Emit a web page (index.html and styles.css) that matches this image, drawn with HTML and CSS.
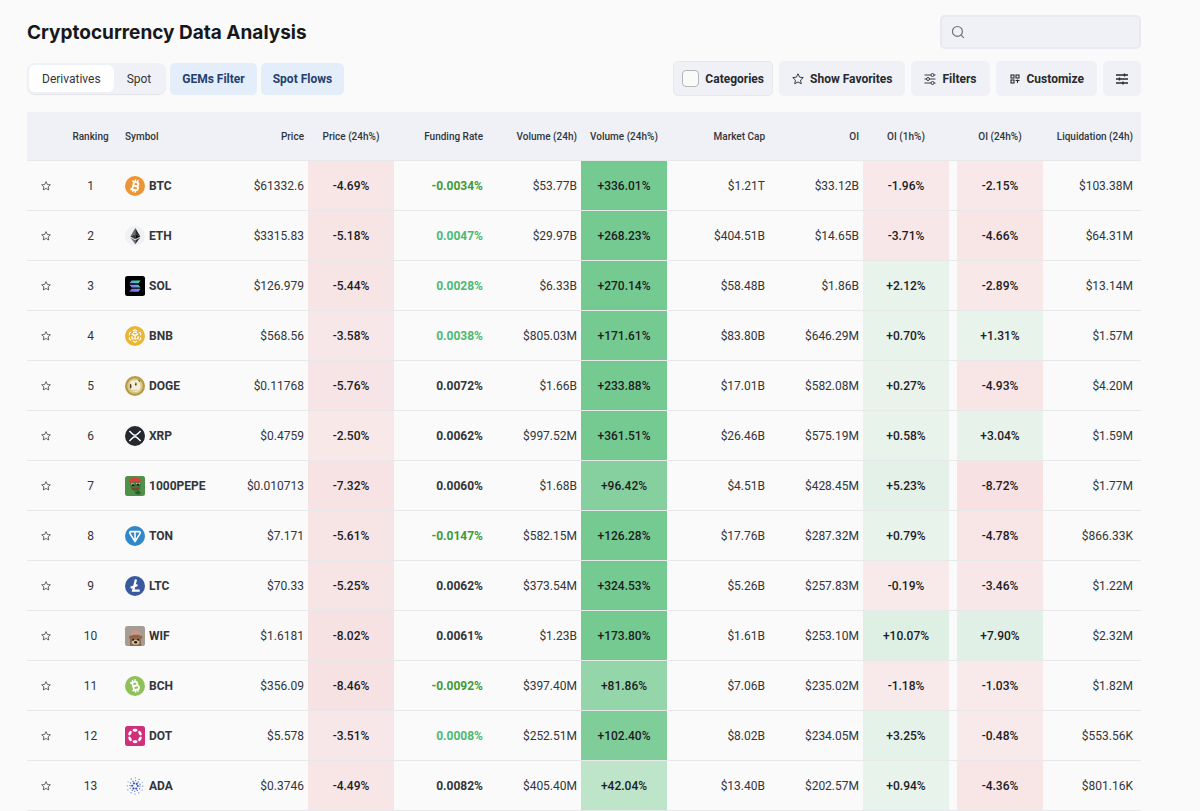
FILE: index.html
```
<!DOCTYPE html>
<html lang="en">
<head>
  <meta charset="UTF-8">
  <meta name="viewport" content="width=device-width, initial-scale=1.0">
  <title>Cryptocurrency Data Analysis</title>
  <link rel="stylesheet" href="styles.css">
</head>
<body>

  <!-- shared icons -->
  <svg class="sprite" aria-hidden="true">
    <symbol id="i-star" viewBox="0 0 24 24">
      <path d="M12 1.5l3.2 6.8 7.3.9-5.4 5 1.4 7.3-6.5-3.6-6.500 3.600 1.400-7.300-5.400-5 7.300-.9z" fill="none" stroke="currentColor" stroke-width="1.8" stroke-linejoin="round"/>
    </symbol>
    <symbol id="c-btc" viewBox="0 0 32 32">
      <circle cx="16" cy="16" r="16" fill="#ee9434"/>
      <g transform="rotate(14 16 16)" fill="none" stroke="#fff" stroke-width="3">
        <path d="M10 9.600h7.500a3.100 3.100 0 0 1 0 6.200H13M13 15.800h5.300a3.300 3.300 0 0 1 0 6.600H10M13 9.600v12.800"/>
        <path d="M14.500 5.500v4M18.500 5.500v4M14.500 22.500v4M18.500 22.500v4" stroke-width="2.200"/>
      </g>
    </symbol>
    <symbol id="c-eth" viewBox="0 0 32 32">
      <circle cx="16" cy="16" r="16" fill="#f0f1f4"/>
      <path d="M16.500 3v9.900l-8 3.700z" fill="#6b6b6b"/>
      <path d="M16.500 3v9.900l8 3.700z" fill="#2b2b2b"/>
      <path d="M16.500 12.900v8.400l-8-4.700z" fill="#3a3a3a"/>
      <path d="M16.500 12.900v8.400l8-4.700z" fill="#111"/>
      <path d="M8.500 18.200l8 4.700V29z" fill="#777"/>
      <path d="M24.500 18.200l-8 4.700V29z" fill="#333"/>
    </symbol>
    <linearGradient id="sol-fill" x1="8" y1="25" x2="24" y2="7" gradientUnits="userSpaceOnUse">
      <stop offset="0" stop-color="#a04bfa"/>
      <stop offset=".5" stop-color="#6a97dc"/>
      <stop offset="1" stop-color="#35eba6"/>
    </linearGradient>
    <symbol id="c-sol" viewBox="0 0 32 32">
      <rect width="32" height="32" rx="4" fill="#000"/>
      <path d="M10.500 7H25l-3.500 4.500H7zM7 13.800h14.500l3.500 4.500H10.500zM10.500 20.500H25L21.500 25H7z" fill="url(#sol-fill)"/>
    </symbol>
    <symbol id="c-bnb" viewBox="0 0 32 32">
      <circle cx="16" cy="16" r="16" fill="#e8b534"/>
      <g fill="none" stroke="#fff" stroke-width="1.8">
        <path d="M12.500 8L16 6l3.500 2M22 9.600l3 1.800v3.400M25 18v3l-3 1.800M19.500 24L16 26l-3.500-2M10 22.800L7 21v-3M7 14.800v-3.400l3-1.800"/>
        <path d="M11 12.500l5 3 5-3M16 15.500v6.500M11 16.500v3l2.500 1.500M21 16.500v3L18.500 21M13 11l3-1.500 3 1.500" stroke-width="2.200"/>
      </g>
    </symbol>
    <symbol id="c-doge" viewBox="0 0 32 32">
      <circle cx="16" cy="16" r="16" fill="#b59a43"/>
      <circle cx="16" cy="16" r="12.500" fill="#d9c788"/>
      <path d="M8 13c0-5 4-7 8-6l6-1 2 6c2 6 0 12-5 13-6 1-11-2-11-7z" fill="#f5eed6"/>
      <path d="M8 13c2-1 3 2 2 6l-2 1z" fill="#4a4022"/>
      <path d="M16 10c3-1 4 2 3 5l-3 1z" fill="#b9a15a"/>
      <circle cx="17" cy="13" r="1.200" fill="#333"/>
      <path d="M20 5l4 2-1 3z" fill="#6a5728"/>
      <path d="M10 22c3 2 7 2 10 0" stroke="#c8b06a" fill="none"/>
    </symbol>
    <symbol id="c-xrp" viewBox="0 0 32 32">
      <circle cx="16" cy="16" r="16" fill="#23292f"/>
      <path d="M7 8l5 4.900c2.300 2.200 5.700 2.200 8 0L25 8M7 24l5-4.900c2.300-2.200 5.700-2.200 8 0l5 4.900" fill="none" stroke="#fff" stroke-width="2.400"/>
    </symbol>
    <symbol id="c-pepe" viewBox="0 0 32 32">
      <rect width="32" height="32" rx="4" fill="#4f9148"/>
      <path d="M8 9c1 5 0 9 4 13l3 3h7c4-4 3-11 2-16z" fill="#3c7a3b"/>
      <path d="M6 8c1-6 16-8 18-2l2 2-3 3c-4-2-10-2-14 1z" fill="#d8403a"/>
      <path d="M10 12h5v2h-5zM18 11h6v2h-6z" fill="#e9f0e6"/>
      <path d="M11 13h4v3h-4zM19 12h4v3h-4z" fill="#161b17"/>
      <path d="M9 18c4 2 9 2 14 0l-1 3c-3 2-8 2-11 0z" fill="#8e3b2d"/>
      <path d="M15 27l6-4 5 4-5 3z" fill="#2c5b2f"/>
    </symbol>
    <symbol id="c-ton" viewBox="0 0 32 32">
      <circle cx="16" cy="16" r="16" fill="#3088cb"/>
      <path d="M9.500 9h13c1.600 0 2.500 1.400 1.700 2.700L16 25 7.800 11.700C7 10.400 7.900 9 9.500 9zM16 9v15" fill="none" stroke="#fff" stroke-width="2.500" stroke-linejoin="round"/>
    </symbol>
    <symbol id="c-ltc" viewBox="0 0 32 32">
      <circle cx="16" cy="16" r="16" fill="#3a5a9d"/>
      <path d="M17.500 5.500L13 23.500h10.500M9 18.800l11-4.300" fill="none" stroke="#fff" stroke-width="3.600"/>
    </symbol>
    <symbol id="c-wif" viewBox="0 0 32 32">
      <rect width="32" height="32" rx="4" fill="#a59c92"/>
      <path d="M8 20c0-4 16-4 17 0l1 12H8z" fill="#8c6a49"/>
      <path d="M8 17c0-13 16-14 18 0-6-3-12-3-18 0z" fill="#c9998a"/>
      <path d="M6 17c6-4 16-4 22 0l-2 4c-6-3-12-3-18 0z" fill="#96604f"/>
      <ellipse cx="17" cy="26" rx="6" ry="4" fill="#d8c2a0"/>
      <circle cx="13" cy="22" r="1.500" fill="#1d1713"/>
      <circle cx="21" cy="22" r="1.500" fill="#1d1713"/>
      <ellipse cx="17" cy="26" rx="2.500" ry="2" fill="#1d1713"/>
    </symbol>
    <symbol id="c-bch" viewBox="0 0 32 32">
      <circle cx="16" cy="16" r="16" fill="#8fc159"/>
      <g transform="rotate(-16 16 16)" fill="none" stroke="#fff" stroke-width="3">
        <path d="M10 9.600h7.500a3.100 3.100 0 0 1 0 6.200H13M13 15.800h5.300a3.300 3.300 0 0 1 0 6.600H10M13 9.600v12.800"/>
        <path d="M14.500 5.500v4M18.500 5.500v4M14.500 22.500v4M18.500 22.500v4" stroke-width="2.200"/>
      </g>
    </symbol>
    <symbol id="c-dot" viewBox="0 0 32 32">
      <rect width="32" height="32" rx="4" fill="#d0307a"/>
      <g fill="#fff">
        <ellipse cx="16" cy="6.800" rx="4" ry="2.300"/>
        <ellipse cx="16" cy="25.200" rx="4" ry="2.300"/>
        <ellipse cx="16" cy="6.800" rx="4" ry="2.300" transform="rotate(60 16 16)"/>
        <ellipse cx="16" cy="6.800" rx="4" ry="2.300" transform="rotate(120 16 16)"/>
        <ellipse cx="16" cy="6.800" rx="4" ry="2.300" transform="rotate(240 16 16)"/>
        <ellipse cx="16" cy="6.800" rx="4" ry="2.300" transform="rotate(300 16 16)"/>
      </g>
    </symbol>
    <symbol id="c-ada" viewBox="0 0 32 32">
      <g fill="none" stroke="#2f57b5" stroke-linecap="round">
        <circle cx="16" cy="16" r="4.500" stroke-width="3.400" stroke-dasharray=".1 4.612"/>
        <circle cx="16" cy="16" r="8" stroke-width="2" stroke-dasharray=".1 8.278"/>
        <circle cx="16" cy="16" r="8.500" stroke-width="1.800" stroke-dasharray=".1 8.801" stroke-dashoffset="4.450"/>
        <circle cx="16" cy="16" r="12.500" stroke-width="1.900" stroke-dasharray=".1 12.990" opacity=".8"/>
        <circle cx="16" cy="16" r="13" stroke-width="1.700" stroke-dasharray=".1 13.514" stroke-dashoffset="6.807" opacity=".7"/>
      </g>
    </symbol>
  </svg>

  <header class="page-head">
    <h1>Cryptocurrency Data Analysis</h1>
    <div class="search">
      <svg viewBox="0 0 24 24" aria-hidden="true"><circle cx="11" cy="11" r="8.500"/><path d="M17.500 17.500L22 22"/></svg>
      <input type="search" aria-label="Search">
    </div>
  </header>

  <div class="toolbar">
    <div class="toolbar-left">
      <div class="tabs">
        <button type="button" class="tab active">Derivatives</button>
        <button type="button" class="tab">Spot</button>
      </div>
      <button type="button" class="btn-blue">GEMs Filter</button>
      <button type="button" class="btn-blue">Spot Flows</button>
    </div>
    <div class="toolbar-right">
      <label class="btn categories"><input type="checkbox">Categories</label>
      <button type="button" class="btn">
        <svg class="icon"><use href="#i-star"/></svg>
        Show Favorites
      </button>
      <button type="button" class="btn">
        <svg class="icon" viewBox="0 0 24 24" fill="none" stroke="currentColor" stroke-width="1.800">
          <path d="M1 4h13M20 4h3M1 12h4M11 12h12M1 20h13M20 20h3"/>
          <circle cx="17" cy="4" r="3"/><circle cx="8" cy="12" r="3"/><circle cx="17" cy="20" r="3"/>
        </svg>
        Filters
      </button>
      <button type="button" class="btn">
        <svg class="icon" viewBox="0 0 24 24" fill="none" stroke="currentColor" stroke-width="2.200">
          <rect x="4" y="4" width="6" height="6"/><rect x="4" y="14" width="6" height="6"/><rect x="14" y="4" width="6" height="6"/>
          <path d="M13 15h8M17 13v7"/>
        </svg>
        Customize
      </button>
      <button type="button" class="btn" aria-label="Table settings">
        <svg class="icon" viewBox="0 0 24 24" fill="none" stroke="currentColor" stroke-width="2.800">
          <path d="M0 4h24M0 12h24M0 20h24M17 1v6M7 9v6M14 17v6"/>
        </svg>
      </button>
    </div>
  </div>

  <table class="coins">
    <colgroup>
      <col class="w-star"><col class="w-rank"><col class="w-symbol"><col class="w-value"><col class="w-heat">
      <col class="w-fund"><col class="w-value"><col class="w-heat"><col class="w-cap"><col class="w-value">
      <col class="w-heat"><col class="w-value"><col class="w-liq">
    </colgroup>
    <thead>
      <tr>
        <th aria-label="Favorite"></th>
        <th class="center">Ranking</th>
        <th class="symbol">Symbol</th>
        <th>Price</th>
        <th class="center">Price (24h%)</th>
        <th>Funding Rate</th>
        <th>Volume (24h)</th>
        <th class="center">Volume (24h%)</th>
        <th>Market Cap</th>
        <th>OI</th>
        <th class="center">OI (1h%)</th>
        <th class="center spaced">OI (24h%)</th>
        <th class="last">Liquidation (24h)</th>
      </tr>
    </thead>
    <tbody id="rows"></tbody>
  </table>

  <script>
    // symbol, icon, price, price 24h, funding, volume, volume 24h, market cap, oi, oi 1h, oi 24h, liquidation
    const coins = [
      ['BTC', 'btc', '$61332.6', '-4.69%', '-0.0034%', '$53.77B', '+336.01%', '$1.21T', '$33.12B', '-1.96%', '-2.15%', '$103.38M'],
      ['ETH', 'eth', '$3315.83', '-5.18%', '0.0047%', '$29.97B', '+268.23%', '$404.51B', '$14.65B', '-3.71%', '-4.66%', '$64.31M'],
      ['SOL', 'sol', '$126.979', '-5.44%', '0.0028%', '$6.33B', '+270.14%', '$58.48B', '$1.86B', '+2.12%', '-2.89%', '$13.14M'],
      ['BNB', 'bnb', '$568.56', '-3.58%', '0.0038%', '$805.03M', '+171.61%', '$83.80B', '$646.29M', '+0.70%', '+1.31%', '$1.57M'],
      ['DOGE', 'doge', '$0.11768', '-5.76%', '0.0072%', '$1.66B', '+233.88%', '$17.01B', '$582.08M', '+0.27%', '-4.93%', '$4.20M'],
      ['XRP', 'xrp', '$0.4759', '-2.50%', '0.0062%', '$997.52M', '+361.51%', '$26.46B', '$575.19M', '+0.58%', '+3.04%', '$1.59M'],
      ['1000PEPE', 'pepe', '$0.010713', '-7.32%', '0.0060%', '$1.68B', '+96.42%', '$4.51B', '$428.45M', '+5.23%', '-8.72%', '$1.77M'],
      ['TON', 'ton', '$7.171', '-5.61%', '-0.0147%', '$582.15M', '+126.28%', '$17.76B', '$287.32M', '+0.79%', '-4.78%', '$866.33K'],
      ['LTC', 'ltc', '$70.33', '-5.25%', '0.0062%', '$373.54M', '+324.53%', '$5.26B', '$257.83M', '-0.19%', '-3.46%', '$1.22M'],
      ['WIF', 'wif', '$1.6181', '-8.02%', '0.0061%', '$1.23B', '+173.80%', '$1.61B', '$253.10M', '+10.07%', '+7.90%', '$2.32M'],
      ['BCH', 'bch', '$356.09', '-8.46%', '-0.0092%', '$397.40M', '+81.86%', '$7.06B', '$235.02M', '-1.18%', '-1.03%', '$1.82M'],
      ['DOT', 'dot', '$5.578', '-3.51%', '0.0008%', '$252.51M', '+102.40%', '$8.02B', '$234.05M', '+3.25%', '-0.48%', '$553.56K'],
      ['ADA', 'ada', '$0.3746', '-4.49%', '0.0082%', '$405.40M', '+42.04%', '$13.40B', '$202.57M', '+0.94%', '-4.36%', '$801.16K']
    ];

    // bigger change = stronger colour
    function heat(value) {
      const n = parseFloat(value);
      const alpha = Math.min(0.8, 0.1 + Math.abs(n) * 0.0063).toFixed(3);
      const rgb = n < 0 ? '236, 98, 106' : '84, 190, 119';
      return `<div class="heat" style="background-color: rgba(${rgb}, ${alpha})">${value}</div>`;
    }

    function fundingClass(value) {
      const n = parseFloat(value);
      if (n < 0) return 'negative';
      return n < 0.005 ? 'low' : '';
    }

    document.getElementById('rows').innerHTML = coins.map((c, i) => `
      <tr>
        <td class="center"><button type="button" class="star" aria-label="Add ${c[0]} to favorites"><svg><use href="#i-star"/></svg></button></td>
        <td class="center">${i + 1}</td>
        <td class="symbol"><div class="coin"><svg><use href="#c-${c[1]}"/></svg>${c[0]}</div></td>
        <td>${c[2]}</td>
        <td class="heat-cell">${heat(c[3])}</td>
        <td class="funding ${fundingClass(c[4])}">${c[4]}</td>
        <td>${c[5]}</td>
        <td class="heat-cell">${heat(c[6])}</td>
        <td>${c[7]}</td>
        <td>${c[8]}</td>
        <td class="heat-cell">${heat(c[9])}</td>
        <td class="heat-cell spaced">${heat(c[10])}</td>
        <td class="last">${c[11]}</td>
      </tr>`).join('');
  </script>

</body>
</html>
```
FILE: styles.css
```
* {
  box-sizing: border-box;
}
body {
  margin: 0;
  padding: 15px 59px 0 27px;
  background-color: #fafafa;
  color: #32353b;
  font-family: Roboto, "Liberation Sans", sans-serif;
  font-size: 12px;
}
button,
input {
  font: inherit;
  color: inherit;
}
button {
  border: none;
  cursor: pointer;
}
.sprite {
  position: absolute;
  width: 0;
  height: 0;
}

/* header */
.page-head {
  display: flex;
  justify-content: space-between;
  align-items: center;
  height: 34px;
}
h1 {
  margin: 0;
  font-family: Inter, sans-serif;
  font-size: 19px;
  font-weight: 700;
  color: #17181a;
}
.search {
  display: flex;
  align-items: center;
  width: 201px;
  height: 34px;
  padding: 0 9px;
  background-color: #f0f1f6;
  border: 2px solid #e8eaee;
  border-radius: 5px;
}
.search svg {
  width: 14px;
  height: 14px;
  fill: none;
  stroke: #6c6f75;
  stroke-width: 2;
}
.search input {
  flex: 1;
  min-width: 0;
  margin-left: 8px;
  border: none;
  outline: none;
  background: none;
}

/* toolbar */
.toolbar {
  display: flex;
  justify-content: space-between;
  align-items: center;
  margin-top: 12px;
  height: 35px;
}
.toolbar-left {
  display: flex;
  align-items: center;
  gap: 4px;
}
.toolbar-right {
  display: flex;
  gap: 6px;
}
.tabs {
  display: flex;
  height: 31px;
  padding: 2px;
  background-color: #f0f1f6;
  border-radius: 8px;
  box-shadow: 0 1px 1px #e2e4e8;
}
.tab {
  padding: 0 13px;
  background: none;
  border-radius: 6px;
}
.tab.active {
  background-color: #fff;
}
.btn-blue {
  height: 32px;
  padding: 0 12px;
  background-color: #e4eefa;
  border-radius: 5px;
  color: #23406f;
  font-weight: 700;
}
.btn {
  display: flex;
  align-items: center;
  gap: 6px;
  height: 35px;
  padding: 0 13px;
  background-color: #f0f1f6;
  border-radius: 5px;
  color: #27292d;
  font-weight: 700;
}
.categories {
  padding: 0 8px;
  border: 1px solid #e6e8ec;
}
.categories input {
  appearance: none;
  width: 17px;
  height: 17px;
  margin: 0;
  background-color: #fafafa;
  border: 1px solid #b4b6ba;
  border-radius: 4px;
}
.icon {
  width: 12px;
  height: 12px;
}

/* table */
.coins {
  width: 100%;
  margin-top: 16px;
  table-layout: fixed;
  border-collapse: separate;
  border-spacing: 0;
}
.w-star { width: 38px; }
.w-rank { width: 51px; }
.w-symbol { width: 98px; }
.w-value { width: 94px; }
.w-heat { width: 86px; }
.w-fund { width: 93px; }
.w-cap { width: 102px; }
.w-liq { width: 98px; }
th,
td {
  padding: 0 4px;
  text-align: right;
  white-space: nowrap;
  border-bottom: 1px solid #e7e8ea;
}
th {
  height: 49px;
  background-color: #f0f1f6;
  font-size: 10px;
  font-weight: 500;
}
td {
  height: 50px;
  padding-top: 1px;
}
.center {
  padding-left: 0;
  padding-right: 0;
  text-align: center;
}
.symbol {
  padding-left: 9px;
  text-align: left;
}
.last {
  padding-right: 8px;
}
.coin {
  display: flex;
  align-items: center;
  gap: 4px;
  font-weight: 700;
}
.coin svg {
  flex: none;
  width: 20px;
  height: 20px;
}
.star {
  display: block;
  margin: 0 auto;
  padding: 0;
  background: none;
}
.star svg {
  display: block;
  width: 10px;
  height: 10px;
}
.heat-cell {
  padding: 0;
}
.spaced {
  padding-left: 8px;
}
.heat {
  height: 49px;
  line-height: 51px;
  text-align: center;
  font-weight: 500;
  color: #1d2023;
}
.funding {
  font-weight: 700;
}
.negative {
  color: #3f9a35;
}
.low {
  color: #4bb974;
}
```
